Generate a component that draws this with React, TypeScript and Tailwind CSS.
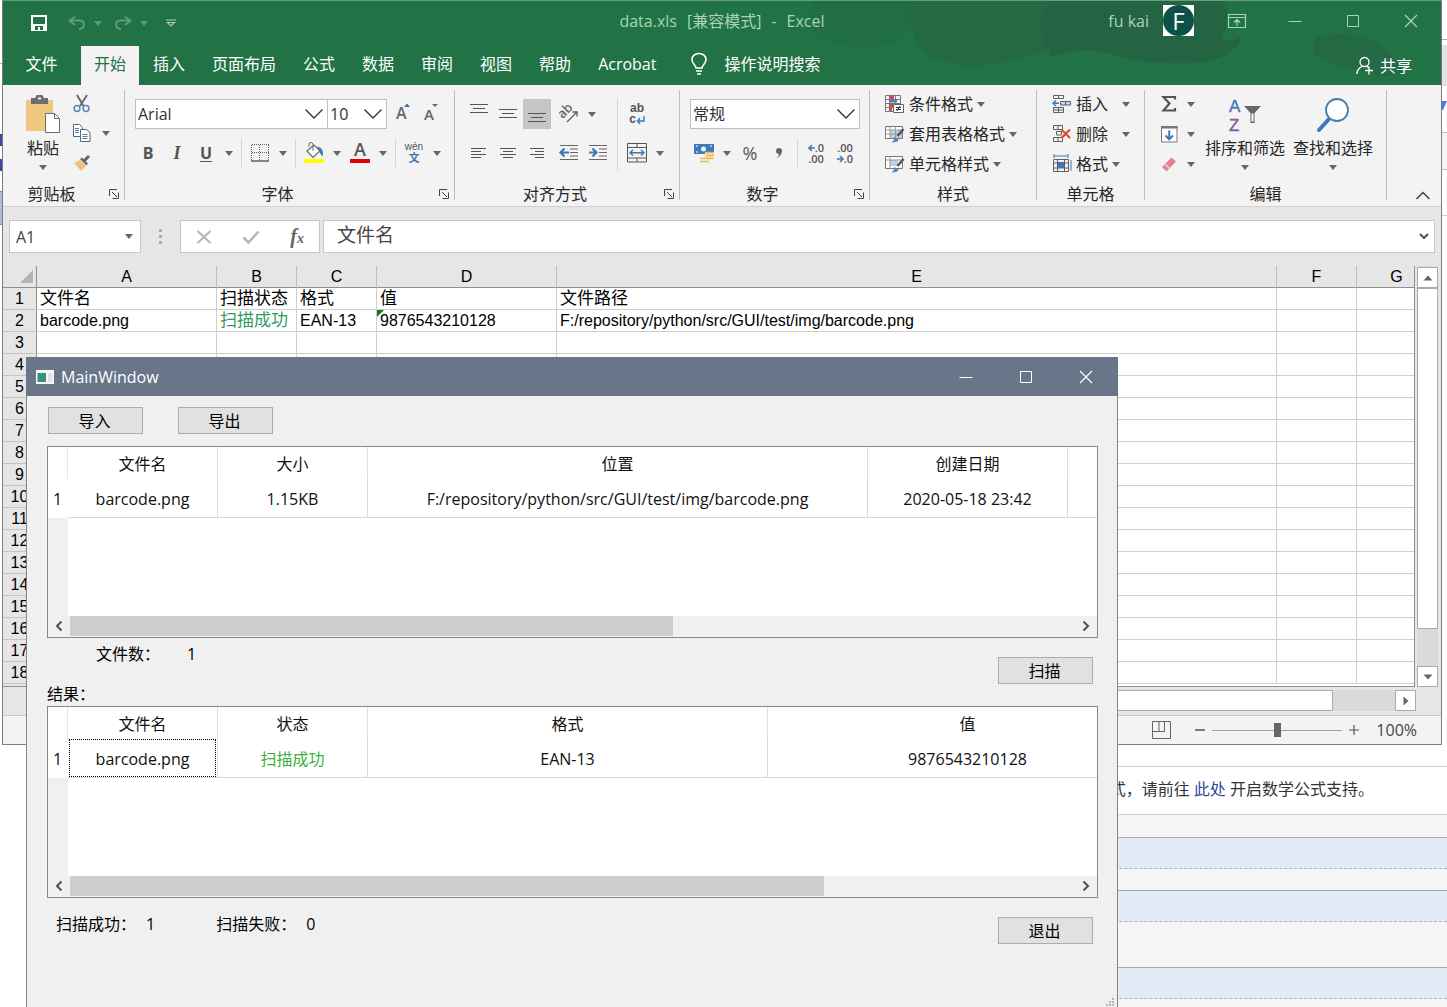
import type { ReactNode } from "react";

const UI_FONT = "font-['Open_Sans','Noto_Sans_CJK_SC',sans-serif]";
const GRID_FONT = "font-['Liberation_Sans','Noto_Sans_CJK_SC',sans-serif]";

const tabs = ["插入", "页面布局", "公式", "数据", "审阅", "视图", "帮助"];

const sheetColumns = [
  { name: "A", col: "w-[180px]" },
  { name: "B", col: "w-[80px]" },
  { name: "C", col: "w-[80px]" },
  { name: "D", col: "w-[180px]" },
  { name: "E", col: "w-[720px]" },
  { name: "F", col: "w-[80px]" },
  { name: "G", col: "w-[80px]" },
];

const sheetData: Record<string, string> = {
  A1: "文件名",
  B1: "扫描状态",
  C1: "格式",
  D1: "值",
  E1: "文件路径",
  A2: "barcode.png",
  B2: "扫描成功",
  C2: "EAN-13",
  D2: "9876543210128",
  E2: "F:/repository/python/src/GUI/test/img/barcode.png",
};

const sheetRows = Array.from({ length: 18 }, (_, i) => i + 1);

/* ---------- icons ---------- */

interface IconProps {
  w?: number;
  h?: number;
  className?: string;
  children: ReactNode;
}

function Icon({ w = 20, h = 20, className, children }: IconProps) {
  return (
    <svg
      width={w}
      height={h}
      viewBox={`0 0 ${w} ${h}`}
      fill="none"
      stroke="#5f5f5f"
      className={`shrink-0 overflow-visible ${className ?? ""}`}
      aria-hidden="true"
    >
      {children}
    </svg>
  );
}

function Caret({ color = "#666" }: { color?: string }) {
  return (
    <Icon w={8} h={5}>
      <path d="M0 0h8l-4 5z" fill={color} stroke="none" />
    </Icon>
  );
}

function Chevron() {
  return (
    <Icon w={20} h={12} className="pointer-events-none">
      <path d="M1.500 1.500l8.500 8.500 8.500-8.500" stroke="#333" strokeWidth="1.400" />
    </Icon>
  );
}

function SaveIcon() {
  return (
    <Icon w={18} h={18}>
      <path d="M2 2h14v14H2z" stroke="#fff" strokeWidth="2" />
      <path d="M3 10h12v6H3z" fill="#fff" stroke="none" />
      <path d="M5 12h8v4H5z" fill="#217346" stroke="none" />
      <path d="M8 13h2v3H8z" fill="#fff" stroke="none" />
    </Icon>
  );
}

function UndoIcon({ flip }: { flip?: boolean }) {
  return (
    <Icon w={18} h={16} className={flip ? "-scale-x-100" : ""}>
      <path d="M7 1.500L1.500 5.500 7 10" stroke="#5f9a78" strokeWidth="2" />
      <path d="M2 5.500h9c3 0 5 1.500 5 4s-2 4.500-5 4.500" stroke="#5f9a78" strokeWidth="2.200" />
    </Icon>
  );
}

function CustomizeIcon() {
  return (
    <Icon w={12} h={9}>
      <path d="M1 1h10M2.500 3.500h7L6 7z" stroke="#a9cdb8" strokeWidth="1.200" />
    </Icon>
  );
}

function PasteIcon() {
  return (
    <Icon w={36} h={40}>
      <path d="M1 5h27v31H1z" fill="#eec87f" stroke="none" />
      <path d="M6 3h4.500V2q0-2 2-2h4q2 0 2 2v1H23v6H6z" fill="#6d6d6d" stroke="none" />
      <path d="M13 2.500h3v2h-3z" fill="#f3f3f3" stroke="none" />
      <path d="M20.500 18.500h9l5 5v14h-14z" fill="#fff" stroke="#6d6d6d" />
      <path d="M29.500 18.500v5h5" stroke="#6d6d6d" />
    </Icon>
  );
}

function CutIcon() {
  return (
    <Icon w={18} h={19}>
      <path d="M4 1l6.500 11M14 1L7 12" stroke="#6a6a6a" strokeWidth="2" />
      <circle cx="4" cy="14.500" r="2.900" stroke="#5b87b8" strokeWidth="1.500" />
      <circle cx="13" cy="14.500" r="2.900" stroke="#5b87b8" strokeWidth="1.500" />
    </Icon>
  );
}

function CopyIcon() {
  return (
    <Icon w={18} h={18}>
      <path d="M.5.5h6l3 3v9h-9z" fill="#fff" stroke="#56677c" />
      <path d="M7.500 5.500h6l3.500 3v9H7.500z" fill="#fff" stroke="#56677c" />
      <path d="M2 4.500h4M2 6.500h4M2 8.500h4M9.500 10.500h5M9.500 12.500h5M9.500 14.500h5" stroke="#56799f" />
    </Icon>
  );
}

function BrushIcon() {
  return (
    <Icon w={18} h={16}>
      <path d="M1 8l6-3 6 6-5 5z" fill="#eec07a" stroke="none" />
      <path d="M7 4l2-1.500 6 6L13.500 10.500z" fill="#666" stroke="none" />
      <path d="M11 6l5-5" stroke="#666" strokeWidth="3" />
    </Icon>
  );
}

function BordersIcon() {
  return (
    <Icon w={18} h={18}>
      <path d="M.5 1v15M17.500 1v15M1 .5h17M8.500 1v15M1 8.500h17" strokeDasharray="1 1" />
      <path d="M0 17h18" strokeWidth="1.500" />
    </Icon>
  );
}

function FillIcon() {
  return (
    <Icon w={22} h={22}>
      <path d="M4 9l7-6 6 6-7 6.500z" fill="#fff" stroke="#666" strokeWidth="1.200" />
      <path d="M10 9V2.500q0-2 -2-2t-2 2V5" stroke="#666" />
      <path d="M14 4.500q7 1 6 9.500q-3-1-3.500-5z" fill="#3f78b5" stroke="none" />
      <path d="M1 17h20v4H1z" fill="#ffff00" stroke="none" />
    </Icon>
  );
}

function LinesIcon({ lines }: { lines: string }) {
  return (
    <Icon w={20} h={20}>
      <path d={lines} stroke="#555" />
    </Icon>
  );
}

function IndentIcon({ flip }: { flip?: boolean }) {
  return (
    <Icon w={20} h={18}>
      <path d="M1 1.500h18M11 5h8M11 8.500h8M11 12h8M1 15.500h18" stroke="#666" />
      <path
        d={flip ? "M1 8.500h7M4.500 4.500l4 4-4 4" : "M2 8.500h8M5.500 4.500l-4 4 4 4"}
        stroke="#3f78b5"
        strokeWidth="2.200"
      />
    </Icon>
  );
}

function OrientationIcon() {
  return (
    <Icon w={20} h={20}>
      <text
        x="0"
        y="11"
        transform="rotate(-45 7 9)"
        fontSize="13"
        fontWeight="600"
        fill="#666"
        stroke="none"
      >
        ab
      </text>
      <path d="M8 18L18 8M13.500 8H18v4.500" strokeWidth="1.300" />
    </Icon>
  );
}

function MergeIcon() {
  return (
    <Icon w={20} h={20}>
      <path d="M.5.5h19v18.500H.5zM.5 4.500h19M.5 15h19M10 .5v4M10 15v4" stroke="#555" />
      <path d="M3 9.750h14M6 7L3 9.750l3 2.750M14 7l3 2.750-3 2.750" stroke="#3f78b5" strokeWidth="1.400" />
    </Icon>
  );
}

function MoneyIcon() {
  return (
    <Icon w={20} h={20}>
      <path d="M0 1h20v10H0z" fill="#3f78b5" stroke="none" />
      <circle cx="9.500" cy="6" r="2.500" fill="#f3f3f3" stroke="none" />
      <path d="M2 3h2M2 9h2M16 3h2" stroke="#fff" />
      <path d="M11 9h9v7h-9z" fill="#f6e3b4" stroke="none" />
      <path d="M12 9.500h8M12 12.500h8M11 15.500h8M6 15.500h6M6 18.500h9" stroke="#e6b95f" strokeWidth="1.500" />
    </Icon>
  );
}

function ConditionalIcon() {
  return (
    <Icon w={20} h={20}>
      <path d="M.5 1.500h15v16H.5zM.5 5.500h15M.5 9.500h15M.5 13.500h15M4.500 1.500v16M10.500 1.500v16" stroke="#7a7a7a" />
      <path d="M4 1h5v4H4zM4 9h4v4H4zM4 14h3v3H4z" fill="#cf4b5c" stroke="none" />
      <path d="M4 5.500h8v3H4z" fill="#4b7fae" stroke="none" />
      <path d="M8.500 10.500h10v8h-10z" fill="#fff" stroke="#666" />
      <path d="M11 13.500h5M11 15.500h5M15 12l-3 5" stroke="#333" />
    </Icon>
  );
}

function TableStyleIcon({ single }: { single?: boolean }) {
  return (
    <Icon w={20} h={18}>
      <path d="M.5 1.500h17v12H.5z" fill="#fff" stroke="#777" />
      {single ? (
        <path d="M5 5h8v6H5z" fill="#bdd0e6" stroke="none" />
      ) : (
        <path d="M5 5h12v8H5z" fill="#bdd0e6" stroke="none" />
      )}
      <path d={single ? "M.5 5h17M5 1.500v12" : "M.5 5h17M.5 9h17M5 1.500v12M10.500 1.500v12"} stroke="#999" />
      <path d="M18.500 4l-6 7" stroke="#555" strokeWidth="2.500" />
      <path d="M6 17.500q3-1 3.500-5.500l4 2.500q0 3-7.500 3z" fill="#4b86c2" stroke="none" />
    </Icon>
  );
}

function InsertCellsIcon() {
  return (
    <Icon w={20} h={20}>
      <path d="M1.500 1.500h10v3h-10zM6.500 1.500v3M1.500 13.500h10v5h-10zM6.500 13.500v5M1.500 16h10" />
      <path d="M8.500 7.500h10v3.500h-10zM13.500 7.500v3.500" fill="#c9d8ea" />
      <path d="M7 9.250H1M4 6.500L1 9.250 4 12" stroke="#3f78b5" strokeWidth="1.400" />
    </Icon>
  );
}

function DeleteCellsIcon() {
  return (
    <Icon w={20} h={20}>
      <path d="M1.500 1.500h9v4h-9zM6 1.500v4M1.500 13.500h9v4h-9zM6 13.500v4M4.500 7.500h5v3.500h-5z" />
      <path d="M9.500 5.500l8.500 8.500M18 5.500L9.500 14" stroke="#cf5333" strokeWidth="2.200" />
    </Icon>
  );
}

function FormatCellsIcon() {
  return (
    <Icon w={20} h={20}>
      <path d="M1.500 5.500h15v12h-15zM1.500 9h15M1.500 14h15M5.500 5.500v12M12.500 5.500v12" />
      <path d="M6 8h6v6H6z" fill="#3f78b5" stroke="none" />
      <path d="M2 2h14M2 0v4M16 0v4M19 6v11" stroke="#3f78b5" />
    </Icon>
  );
}

function SigmaIcon() {
  return (
    <Icon w={16} h={18}>
      <path d="M14 4.500V2H2.500l6 6.500-6 7H14V13" stroke="#555" strokeWidth="2.200" />
    </Icon>
  );
}

function FillDownIcon() {
  return (
    <Icon w={17} h={18}>
      <path d="M.5 1.500h15.500v15.500H.5z" fill="#fff" stroke="#777" />
      <path d="M0 1h16.500v2.500H0z" fill="#777" stroke="none" />
      <path d="M8.250 5.500v8.500M4.500 10.500l3.750 3.750L12 10.500" stroke="#3f78b5" strokeWidth="2" />
    </Icon>
  );
}

function EraserIcon() {
  return (
    <Icon w={16} h={16}>
      <path d="M1 11l9.500-9.500 4.500 4L5.500 15.500z" fill="#e57f92" stroke="none" />
      <path d="M4 8l4.500 4.500" stroke="#f6d0d6" strokeWidth="1.500" />
    </Icon>
  );
}

function SortIcon() {
  return (
    <Icon w={38} h={34} className={GRID_FONT}>
      <text x="3" y="14" fontSize="17" fill="#3f78b5" stroke="#3f78b5" strokeWidth="0.400">
        A
      </text>
      <text x="3" y="33" fontSize="17" fill="#8a5a9e" stroke="#8a5a9e" strokeWidth="0.400">
        Z
      </text>
      <path d="M18 8h17l-6.500 7v10h-4V15z" fill="#666" stroke="none" />
      <path d="M25.500 15.500h2v8h-2z" fill="#fff" stroke="none" />
    </Icon>
  );
}

function FindIcon() {
  return (
    <Icon w={34} h={36}>
      <path d="M3 33l10-11" stroke="#3a7abf" strokeWidth="4" strokeLinecap="round" />
      <circle cx="21" cy="13" r="11" fill="#fff" stroke="#4a7ba8" strokeWidth="1.800" />
    </Icon>
  );
}

function LauncherIcon() {
  return (
    <Icon w={10} h={10}>
      <path d="M.5 7V.5H8M3 3l5 5M9.500 3.500v6h-6" stroke="#444" />
    </Icon>
  );
}

function BulbIcon() {
  return (
    <Icon w={18} h={24}>
      <path d="M6 16c0-3-4-4-4-8.500C2 4 5 1.500 9 1.500s7 2.500 7 6c0 4.500-4 5.500-4 8.500zM6 19h6M7 22h4" stroke="#fff" strokeWidth="1.600" />
    </Icon>
  );
}

function ShareIcon() {
  return (
    <Icon w={18} h={20}>
      <circle cx="8.500" cy="6" r="4.500" stroke="#fff" strokeWidth="1.300" />
      <path d="M1 18c0-4 2-6 5-7.500M11 10.500l2 1.500M9 14.500h8M13 10.500v8" stroke="#fff" strokeWidth="1.300" />
    </Icon>
  );
}

function WindowGlyph({ kind, color }: { kind: "min" | "max" | "close"; color: string }) {
  return (
    <Icon w={14} h={14}>
      {kind === "min" && <path d="M.5 7.500h13" stroke={color} />}
      {kind === "max" && <path d="M1.500 1.500h11v11h-11z" stroke={color} />}
      {kind === "close" && <path d="M1 1l12 12M13 1L1 13" stroke={color} strokeWidth="1.200" />}
    </Icon>
  );
}

/* ---------- ribbon ---------- */

interface ToolProps {
  label: string;
  active?: boolean;
  className?: string;
  children: ReactNode;
}

function Tool({ label, active, className, children }: ToolProps) {
  return (
    <button
      type="button"
      aria-label={label}
      className={`flex h-[30px] w-7 shrink-0 items-center justify-center text-[#555] ${
        active ? "bg-[#c5c5c5]" : ""
      } ${className ?? ""}`}
    >
      {children}
    </button>
  );
}

function More({ label }: { label: string }) {
  return (
    <button type="button" aria-label={label} className="flex h-[30px] w-4 shrink-0 items-center justify-center">
      <Caret />
    </button>
  );
}

function Separator() {
  return <span className="mx-[3px] h-7 w-px shrink-0 bg-[#d5d5d5]" />;
}

interface GroupProps {
  title: string;
  width: string;
  launcher?: boolean;
  children: ReactNode;
}

function Group({ title, width, launcher, children }: GroupProps) {
  return (
    <section className={`flex shrink-0 flex-col border-r border-[#bdbdbd] ${width}`}>
      <div className="h-[94px] shrink-0">{children}</div>
      <div className="flex h-5 shrink-0 items-center">
        <h2 className="flex-1 text-center text-base leading-5">{title}</h2>
        {launcher && (
          <button type="button" aria-label={`${title}设置`} className="flex w-6 items-center pl-[9px]">
            <LauncherIcon />
          </button>
        )}
      </div>
    </section>
  );
}

function ComboBox({ label, value, width }: { label: string; value: string; width: string }) {
  return (
    <div className={`relative h-[30px] ${width}`}>
      <select
        aria-label={label}
        defaultValue={value}
        className="h-full w-full appearance-none border border-[#c0c0c0] bg-white pl-[2px] text-base text-[#333] outline-none"
      >
        <option>{value}</option>
      </select>
      <span className="pointer-events-none absolute inset-y-0 right-1 flex items-center">
        <Chevron />
      </span>
    </div>
  );
}

interface MenuItemProps {
  icon: ReactNode;
  label: string;
  wide?: boolean;
}

function MenuItem({ icon, label, wide }: MenuItemProps) {
  return (
    <button type="button" className="flex h-[30px] items-center gap-1 text-base">
      {icon}
      <span>{label}</span>
      <span className={wide ? "ml-[6px] flex w-4 justify-center" : "flex w-2 justify-center"}>
        <Caret />
      </span>
    </button>
  );
}

function BigButton({ icon, label, className }: { icon: ReactNode; label: string; className?: string }) {
  return (
    <button type="button" className={`flex flex-col items-center text-base ${className ?? ""}`}>
      <span className="flex h-[46px] items-center">{icon}</span>
      <span className="leading-5">{label}</span>
      <span className="flex h-[18px] items-center">
        <Caret />
      </span>
    </button>
  );
}

function Ribbon() {
  return (
    <div className="flex h-[122px] border-b border-[#d2d2d2] bg-[#f3f3f3] pt-[5px] pb-[6px] text-[#262626]">
      <Group title="剪贴板" width="w-[122px]" launcher>
        <div className="flex">
          <BigButton icon={<PasteIcon />} label="粘贴" className="mt-[2px] ml-[22px]" />
          <div className="ml-[7px] flex flex-col">
            <Tool label="剪切" className="-mt-[2px]">
              <CutIcon />
            </Tool>
            <div className="flex gap-[2px]">
              <Tool label="复制">
                <CopyIcon />
              </Tool>
              <More label="复制选项" />
            </div>
            <Tool label="格式刷">
              <BrushIcon />
            </Tool>
          </div>
        </div>
      </Group>

      <Group title="字体" width="w-[330px]" launcher>
        <div className="flex flex-col gap-[9px] pt-[9px] pl-[9px]">
          <div className="flex items-center">
            <ComboBox label="字体名称" value="Arial" width="ml-px w-[193px]" />
            <ComboBox label="字号" value="10" width="-ml-px w-[60px]" />
            <Tool label="增大字号" className="ml-[3px]">
              <Icon w={18} h={22}>
                <text x="1" y="16" fontSize="16" fontWeight="600" fill="#666" stroke="none">
                  A
                </text>
                <path d="M9 4l3-3.500L15 4z" fill="#3f6ea5" stroke="none" />
              </Icon>
            </Tool>
            <Tool label="减小字号">
              <Icon w={18} h={22}>
                <text x="1" y="17" fontSize="15" fontWeight="600" fill="#666" stroke="none">
                  A
                </text>
                <path d="M9 1h6l-3 3z" fill="#3f6ea5" stroke="none" />
              </Icon>
            </Tool>
          </div>
          <div className="flex items-center gap-px">
            <Tool label="加粗" className="text-base font-bold">
              B
            </Tool>
            <Tool label="倾斜" className="font-['Liberation_Serif',serif] text-lg font-bold italic">
              I
            </Tool>
            <Tool label="下划线" className="text-base font-bold underline underline-offset-2">
              U
            </Tool>
            <More label="下划线选项" />
            <Separator />
            <Tool label="边框">
              <BordersIcon />
            </Tool>
            <More label="边框选项" />
            <Separator />
            <Tool label="填充颜色">
              <FillIcon />
            </Tool>
            <More label="填充颜色选项" />
            <Tool label="字体颜色">
              <Icon w={22} h={22}>
                <text x="5" y="14" fontSize="18" fontWeight="600" fill="#555" stroke="none">
                  A
                </text>
                <path d="M1 17h20v4H1z" fill="#e60000" stroke="none" />
              </Icon>
            </Tool>
            <More label="字体颜色选项" />
            <Separator />
            <Tool label="拼音" className={`flex-col ${GRID_FONT}`}>
              <span className="text-[10px] leading-[10px]">wén</span>
              <span className="text-[11px] leading-3 font-bold text-[#3f78b5]">文</span>
            </Tool>
            <More label="拼音选项" />
          </div>
        </div>
      </Group>

      <Group title="对齐方式" width="w-[225px]" launcher>
        <div className="flex pt-[9px] pl-[10px]">
          <div className="flex flex-col gap-[9px]">
            <div className="flex gap-px">
              <Tool label="顶端对齐">
                <LinesIcon lines="M1 0.500h18M4 4.500h12M1 8.500h18" />
              </Tool>
              <Tool label="垂直居中">
                <LinesIcon lines="M1 5.500h18M4 9.500h12M1 13.500h18" />
              </Tool>
              <Tool label="底端对齐" active>
                <LinesIcon lines="M1 9.500h18M4 13.500h12M1 17.500h18" />
              </Tool>
              <Tool label="方向" className="ml-[3px]">
                <OrientationIcon />
              </Tool>
              <More label="方向选项" />
            </div>
            <div className="flex gap-px">
              <Tool label="左对齐">
                <LinesIcon lines="M2 5.500h15M2 8.500h10M2 11.500h15M2 14.500h10" />
              </Tool>
              <Tool label="居中">
                <LinesIcon lines="M2 5.500h16M5 8.500h10M2 11.500h16M5 14.500h10" />
              </Tool>
              <Tool label="右对齐">
                <LinesIcon lines="M3 5.500h14M8 8.500h9M3 11.500h14M8 14.500h9" />
              </Tool>
              <Tool label="减少缩进量" className="ml-[3px]">
                <IndentIcon />
              </Tool>
              <Tool label="增加缩进量">
                <IndentIcon flip />
              </Tool>
            </div>
          </div>
          <span className="mr-[5px] ml-[5px] h-[72px] w-px bg-[#d5d5d5]" />
          <div className="flex flex-col gap-[9px]">
            <Tool label="自动换行" className={`flex-col font-bold ${GRID_FONT}`}>
              <span className="text-[12px] leading-[11px]">ab</span>
              <span className="flex text-[12px] leading-[11px]">
                c
                <Icon w={9} h={10}>
                  <path d="M8 2v5H1.500M4 4L1.500 7 4 10" stroke="#3f78b5" strokeWidth="1.400" />
                </Icon>
              </span>
            </Tool>
            <div className="flex gap-px">
              <Tool label="合并后居中">
                <MergeIcon />
              </Tool>
              <More label="合并选项" />
            </div>
          </div>
        </div>
      </Group>

      <Group title="数字" width="w-[190px]" launcher>
        <div className="flex flex-col gap-[9px] pt-[9px] pl-[10px]">
          <ComboBox label="数字格式" value="常规" width="w-[170px]" />
          <div className="flex items-center gap-px">
            <Tool label="会计数字格式">
              <MoneyIcon />
            </Tool>
            <More label="会计数字格式选项" />
            <Tool label="百分比样式" className="text-lg">
              %
            </Tool>
            <Tool label="千位分隔样式">
              <Icon w={8} h={12}>
                <path d="M4 1c2 0 3 1 3 3 0 3-2 5-5 7 1-2 2-3 2-4-2 0-3-1-3-3s1-3 3-3z" fill="#666" stroke="none" />
              </Icon>
            </Tool>
            <Separator />
            <Tool label="增加小数位数" className="flex-col text-[11px] font-semibold">
              <span className="flex items-center leading-[11px]">
                <Icon w={7} h={8}>
                  <path d="M7 4H1M4 1L1 4l3 3" stroke="#3f78b5" strokeWidth="1.600" />
                </Icon>
                .0
              </span>
              <span className="leading-[11px]">.00</span>
            </Tool>
            <Tool label="减少小数位数" className="flex-col text-[11px] font-semibold">
              <span className="leading-[11px]">.00</span>
              <span className="flex items-center leading-[11px]">
                <Icon w={7} h={8}>
                  <path d="M0 4h6M3 1l3 3-3 3" stroke="#3f78b5" strokeWidth="1.600" />
                </Icon>
                .0
              </span>
            </Tool>
          </div>
        </div>
      </Group>

      <Group title="样式" width="w-[167px]">
        <div className="-mt-px flex flex-col items-start pl-[15px]">
          <MenuItem icon={<ConditionalIcon />} label="条件格式" />
          <MenuItem icon={<TableStyleIcon />} label="套用表格格式" />
          <MenuItem icon={<TableStyleIcon single />} label="单元格样式" />
        </div>
      </Group>

      <Group title="单元格" width="w-[108px]">
        <div className="-mt-px flex flex-col items-start pl-[15px]">
          <MenuItem icon={<InsertCellsIcon />} label="插入" wide />
          <MenuItem icon={<DeleteCellsIcon />} label="删除" wide />
          <MenuItem icon={<FormatCellsIcon />} label="格式" />
        </div>
      </Group>

      <Group title="编辑" width="w-[242px]">
        <div className="-mt-px flex pl-[10px]">
          <div className="flex flex-col">
            <div className="flex">
              <Tool label="自动求和">
                <SigmaIcon />
              </Tool>
              <More label="求和选项" />
            </div>
            <div className="flex">
              <Tool label="填充">
                <FillDownIcon />
              </Tool>
              <More label="填充选项" />
            </div>
            <div className="flex">
              <Tool label="清除">
                <EraserIcon />
              </Tool>
              <More label="清除选项" />
            </div>
          </div>
          <BigButton icon={<SortIcon />} label="排序和筛选" className="mt-[3px] ml-[6px]" />
          <BigButton icon={<FindIcon />} label="查找和选择" className="mt-[3px] ml-2" />
        </div>
      </Group>

      <button type="button" aria-label="折叠功能区" className="mr-[10px] ml-auto self-end">
        <Icon w={16} h={9}>
          <path d="M1.500 8L8 1.500 14.500 8" stroke="#444" strokeWidth="1.500" />
        </Icon>
      </button>
    </div>
  );
}

/* ---------- Excel window ---------- */

function TitleBar() {
  return (
    <div className="relative border-t border-[#62a07d] bg-[#217346] text-[#a9d3bb]">
      <svg
        className="absolute inset-y-0 right-0 h-full w-[660px]"
        viewBox="0 0 660 84"
        preserveAspectRatio="none"
        fill="#246442"
        aria-hidden="true"
      >
        <path d="M30 0h100v30q-20 18-50 16t-46-12q-8-18-4-34z" fillOpacity="0.350" />
        <path d="M130 0h140v50q-30 8-62 14-40 4-64-12q-18-20-14-52z" fillOpacity="0.600" />
        <path d="M270 0h172q10 18-2 38 10 4 20-2-6 22-46 26-50 2-80-8-34-10-64 2-10-20-12-38z" />
        <path d="M536 36q24-6 50 0 24 12 36 36-20 8-46-4-24-2-44-14 0-12 4-18z" fillOpacity="0.600" />
      </svg>
      <div className="relative grid h-[45px] grid-cols-[1fr_auto_1fr] items-center pb-[6px]">
        <div className="flex items-center pt-[5px] pl-[27px]">
          <button type="button" aria-label="保存">
            <SaveIcon />
          </button>
          <button type="button" aria-label="撤消" className="mr-2 ml-5">
            <UndoIcon />
          </button>
          <Caret color="#5f9a78" />
          <button type="button" aria-label="恢复" className="mr-2 ml-3">
            <UndoIcon flip />
          </button>
          <Caret color="#5f9a78" />
          <button type="button" aria-label="自定义快速访问工具栏" className="ml-[17px]">
            <CustomizeIcon />
          </button>
        </div>
        <h1 className="flex gap-[10px] text-base">
          <span>data.xls</span>
          <span>[兼容模式]</span>
          <span>-</span>
          <span>Excel</span>
        </h1>
        <div className="flex items-center justify-end pr-px">
          <span className="mr-[14px] text-base">fu kai</span>
          <span className="mr-[14px] flex size-[31px] bg-white">
            <span className="flex w-full items-center justify-center rounded-full bg-[#0c5048] text-2xl leading-none text-white">
              F
            </span>
          </span>
          <button type="button" aria-label="功能区显示选项" className="flex w-[58px] justify-center">
            <Icon w={18} h={14}>
              <path d="M.5.5h17v13H.5zM.5 3.500h17M9 12V6M6 8.500L9 5.500l3 3" stroke="#a9d3bb" strokeWidth="1.200" />
            </Icon>
          </button>
          <button type="button" aria-label="最小化" className="flex w-[58px] justify-center">
            <WindowGlyph kind="min" color="#a9d3bb" />
          </button>
          <button type="button" aria-label="最大化" className="flex w-[58px] justify-center">
            <WindowGlyph kind="max" color="#a9d3bb" />
          </button>
          <button type="button" aria-label="关闭" className="flex w-[58px] justify-center">
            <WindowGlyph kind="close" color="#a9d3bb" />
          </button>
        </div>
      </div>
      <nav className="relative flex h-[39px] items-stretch gap-px text-base text-white">
        <button type="button" className="w-[77px] pb-[3px]">
          文件
        </button>
        <button type="button" className="bg-[#f3f3f3] px-[13px] pb-[3px] text-[#217346]">
          开始
        </button>
        {tabs.map((tab) => (
          <button key={tab} type="button" className="px-[13px] pb-[3px]">
            {tab}
          </button>
        ))}
        <button type="button" className="px-[13px] pb-[3px]">
          Acrobat
        </button>
        <button type="button" className="ml-5 flex items-center gap-4 pb-[3px]">
          <BulbIcon />
          操作说明搜索
        </button>
        <button type="button" className="mr-[29px] ml-auto flex items-center gap-[6px]">
          <ShareIcon />
          共享
        </button>
      </nav>
    </div>
  );
}

function FormulaBar() {
  return (
    <div className="flex h-[59px] items-start bg-[#e6e6e6] px-[6px] pt-[13px]">
      <div className="relative">
        <input
          aria-label="名称框"
          defaultValue="A1"
          className="h-[33px] w-[132px] border border-[#c6c6c6] bg-white pl-[6px] text-base text-[#444] outline-none"
        />
        <span className="pointer-events-none absolute inset-y-0 right-2 flex items-center">
          <Caret />
        </span>
      </div>
      <div className="flex h-[33px] w-[39px] flex-col items-center justify-center gap-[3px]">
        <span className="size-[3px] bg-[#aaa]" />
        <span className="size-[3px] bg-[#aaa]" />
        <span className="size-[3px] bg-[#aaa]" />
      </div>
      <div className="flex h-[33px] w-[140px] items-center justify-around border border-[#c6c6c6] bg-white">
        <button type="button" aria-label="取消">
          <Icon w={16} h={14}>
            <path d="M1.500 1l13 12M14.500 1l-13 12" stroke="#b5b5b5" strokeWidth="2" />
          </Icon>
        </button>
        <button type="button" aria-label="输入">
          <Icon w={18} h={14}>
            <path d="M1.500 7.500l5 5L16.500 1.500" stroke="#b5b5b5" strokeWidth="2.500" />
          </Icon>
        </button>
        <button
          type="button"
          aria-label="插入函数"
          className="font-['Liberation_Serif',serif] text-xl leading-6 font-bold text-[#666] italic"
        >
          f<span className="text-sm">x</span>
        </button>
      </div>
      <div className="relative ml-[3px] flex-1">
        <input
          aria-label="编辑栏"
          defaultValue="文件名"
          className="h-[33px] w-full border border-[#c6c6c6] bg-white pb-[5px] pl-[13px] text-[19px] text-[#444] outline-none"
        />
        <span className="pointer-events-none absolute inset-y-0 right-[6px] flex items-center">
          <Icon w={10} h={7}>
            <path d="M1 1l4 4 4-4" stroke="#555" strokeWidth="2.200" />
          </Icon>
        </span>
      </div>
    </div>
  );
}

function Sheet() {
  return (
    <div className="flex bg-[#e6e6e6]">
      <div className={`min-w-0 flex-1 overflow-hidden border-r border-b border-[#8f8f8f] bg-white ${GRID_FONT}`}>
        <table className="w-[1434px] table-fixed border-separate border-spacing-0 text-[17px] leading-5 text-black">
          <colgroup>
            <col className="w-[34px]" />
            {sheetColumns.map((c) => (
              <col key={c.name} className={c.col} />
            ))}
          </colgroup>
          <thead>
            <tr className="h-[22px] bg-[#e6e6e6]">
              <th className="border-r border-b border-[#8f8f8f] p-0 pr-[3px]" aria-label="全选">
                <Icon w={13} h={13} className="ml-auto">
                  <path d="M13 0v13H0z" fill="#b3b3b3" stroke="none" />
                </Icon>
              </th>
              {sheetColumns.map((c) => (
                <th
                  key={c.name}
                  className="border-r border-b border-r-[#bdbdbd] border-b-[#8f8f8f] p-0 pt-px text-base leading-5 font-normal"
                >
                  {c.name}
                </th>
              ))}
            </tr>
          </thead>
          <tbody>
            {sheetRows.map((row) => (
              <tr key={row} className="h-[22px]">
                <th className="border-r border-b border-r-[#8f8f8f] border-b-[#c4c4c4] bg-[#e6e6e6] p-0 pt-px text-base leading-5 font-normal">
                  {row}
                </th>
                {sheetColumns.map((c) => {
                  const key = `${c.name}${row}`;
                  return (
                    <td
                      key={key}
                      className={`relative border-r border-b border-[#cfcfcf] p-0 pt-px pl-[3px] whitespace-nowrap ${
                        row === 2 && c.name !== "B" ? "text-base leading-5" : ""
                      } ${key === "B2" ? "text-[#2e9b63]" : ""}`}
                    >
                      {key === "D2" && (
                        <svg width="7" height="7" className="absolute top-0 left-0" aria-hidden="true">
                          <path d="M0 0h7L0 7z" fill="#107c10" />
                        </svg>
                      )}
                      {sheetData[key]}
                    </td>
                  );
                })}
              </tr>
            ))}
            <tr className="h-[2px]">
              <th className="border-r border-[#8f8f8f] bg-[#e6e6e6] p-0" />
            </tr>
          </tbody>
        </table>
      </div>
      <div className="mr-[3px] ml-[2px] flex w-[21px] flex-col bg-[#dadada] pt-px">
        <button type="button" aria-label="向上滚动" className="flex h-[21px] items-center justify-center border border-[#ababab] bg-white">
          <Icon w={10} h={6}>
            <path d="M0.500 5.500h9L5 .5z" fill="#666" stroke="none" />
          </Icon>
        </button>
        <div className="h-[341px] border border-[#ababab] bg-white" />
        <button type="button" aria-label="向下滚动" className="mt-auto flex h-[21px] items-center justify-center border border-[#ababab] bg-white">
          <Icon w={10} h={6}>
            <path d="M0.500 .5h9L5 5.500z" fill="#666" stroke="none" />
          </Icon>
        </button>
      </div>
    </div>
  );
}

function StatusBar() {
  return (
    <>
      <div className="flex h-[29px] items-start justify-end border-b border-[#c6c6c6] bg-[#e6e6e6] pt-[3px] pr-[25px]">
        <div className="h-[21px] w-[400px] border border-[#ababab] bg-white" />
        <div className="h-[21px] w-[62px] bg-[#dadada]" />
        <button type="button" aria-label="向右滚动" className="flex size-[21px] items-center justify-center border border-[#ababab] bg-white">
          <Icon w={6} h={10}>
            <path d="M.5.500v9L5.500 5z" fill="#666" stroke="none" />
          </Icon>
        </button>
      </div>
      <div className="flex h-7 items-center justify-end bg-[#f3f3f3] pr-6 text-base text-[#444]">
        <button type="button" aria-label="分页预览" className="mr-[22px]">
          <Icon w={20} h={18}>
            <path d="M.5.500h18v17H.500zM.500 10.500h12M7 .500v10M12.500.500v10" stroke="#666" />
          </Icon>
        </button>
        <button type="button" aria-label="缩小" className="mr-[6px]">
          <Icon w={12} h={12}>
            <path d="M1 6h10" stroke="#555" strokeWidth="1.500" />
          </Icon>
        </button>
        <input
          type="range"
          aria-label="显示比例"
          defaultValue={50}
          className="h-4 w-[130px] appearance-none bg-transparent [&::-webkit-slider-runnable-track]:h-px [&::-webkit-slider-runnable-track]:bg-[#a0a0a0] [&::-webkit-slider-thumb]:-mt-[7px] [&::-webkit-slider-thumb]:h-[14px] [&::-webkit-slider-thumb]:w-[7px] [&::-webkit-slider-thumb]:appearance-none [&::-webkit-slider-thumb]:bg-[#666]"
        />
        <button type="button" aria-label="放大" className="mr-4 ml-[6px]">
          <Icon w={12} h={12}>
            <path d="M1 6h10M6 1v10" stroke="#555" strokeWidth="1.200" />
          </Icon>
        </button>
        <span>100%</span>
      </div>
    </>
  );
}

function ExcelWindow() {
  return (
    <section className="absolute top-0 right-[5px] left-[2px] overflow-hidden border-x border-b border-[#7d7d7d]">
      <TitleBar />
      <Ribbon />
      <FormulaBar />
      <Sheet />
      <StatusBar />
    </section>
  );
}

/* ---------- scanner window ---------- */

interface Cell {
  text: string;
  tone?: string;
  focused?: boolean;
}

interface ListBoxProps {
  headers: string[];
  widths: string[];
  cells: Cell[];
  tableWidth: string;
  thumb: string;
}

function ScrollArrow({ label, d }: { label: string; d: string }) {
  return (
    <button type="button" aria-label={label} className="flex w-[22px] shrink-0 items-center justify-center">
      <Icon w={8} h={12}>
        <path d={d} stroke="#505050" strokeWidth="2" />
      </Icon>
    </button>
  );
}

function ListBox({ headers, widths, cells, tableWidth, thumb }: ListBoxProps) {
  return (
    <div className="flex h-[192px] flex-col overflow-hidden border border-[#828790] bg-white">
      <div className="flex-1 overflow-hidden bg-linear-to-r from-[#f0f0f0] from-[20px] to-white to-[20px]">
        <table className={`table-fixed border-separate border-spacing-0 bg-white text-base text-[#111] ${tableWidth}`}>
          <colgroup>
            <col className="w-5" />
            {widths.map((w, i) => (
              <col key={i} className={w} />
            ))}
          </colgroup>
          <thead>
            <tr className="h-8">
              <th className="border-r border-[#e5e5e5] p-0" />
              {headers.map((h, i) => (
                <th key={i} className="border-r border-[#e0e0e0] p-0 pt-px leading-5 font-normal">
                  {h}
                </th>
              ))}
            </tr>
          </thead>
          <tbody>
            <tr className="h-[39px]">
              <th className="p-0 pr-px font-normal">1</th>
              {cells.map((c, i) => (
                <td key={i} className={`border-r border-b border-[#d8d8d8] p-0 text-center ${c.tone ?? ""}`}>
                  <span
                    className={`flex h-[38px] items-center justify-center pt-[2px] ${
                      c.focused ? "mx-px border border-dotted border-black" : ""
                    }`}
                  >
                    {c.text}
                  </span>
                </td>
              ))}
            </tr>
          </tbody>
        </table>
      </div>
      <div className="flex h-[21px] bg-[#f0f0f0] pb-px">
        <ScrollArrow label="向左滚动" d="M6.500 1.500L2 6l4.500 4.500" />
        <div className="min-w-0 flex-1">
          <div className={`h-full bg-[#cdcdcd] ${thumb}`} />
        </div>
        <ScrollArrow label="向右滚动" d="M1.500 1.500L6 6l-4.500 4.500" />
      </div>
    </div>
  );
}

function PushButton({ children }: { children: ReactNode }) {
  return (
    <button
      type="button"
      className="flex h-[27px] w-[95px] items-center justify-center border border-[#adadad] bg-[#e1e1e1] pr-[2px] text-base leading-5 text-black"
    >
      {children}
    </button>
  );
}

function ScannerWindow() {
  return (
    <section className="absolute top-[357px] right-[329px] bottom-0 left-[26px] flex flex-col overflow-hidden">
      <header className="flex h-[39px] shrink-0 items-center bg-[#69768a] pl-[10px] text-white">
        <Icon w={18} h={14}>
          <path d="M0 0h18v14H0z" fill="#f4f6f8" stroke="none" />
          <path d="M1.500 3h8.500v9h-8.500z" fill="#3a8f80" stroke="none" />
          <path d="M12 3.500h4.500v8.500H12z" fill="#dfe3e6" stroke="none" />
        </Icon>
        <h1 className="ml-[7px] text-base">MainWindow</h1>
        <div className="ml-auto flex pr-[2px]">
          <button type="button" aria-label="最小化" className="flex w-[60px] justify-center">
            <WindowGlyph kind="min" color="#fff" />
          </button>
          <button type="button" aria-label="最大化" className="flex w-[60px] justify-center">
            <WindowGlyph kind="max" color="#fff" />
          </button>
          <button type="button" aria-label="关闭" className="flex w-[60px] justify-center">
            <WindowGlyph kind="close" color="#fff" />
          </button>
        </div>
      </header>
      <div className="relative flex-1 border-x border-[#84868c] bg-[#f0f0f0] px-5 pt-[11px] text-base leading-5 text-black">
        <div className="flex gap-[35px] pl-px">
          <PushButton>导入</PushButton>
          <PushButton>导出</PushButton>
        </div>
        <div className="mt-3 mr-[-1px]">
          <ListBox
            headers={["文件名", "大小", "位置", "创建日期", ""]}
            widths={["w-[150px]", "w-[150px]", "w-[500px]", "w-[200px]", "w-[100px]"]}
            cells={[
              { text: "barcode.png" },
              { text: "1.15KB" },
              { text: "F:/repository/python/src/GUI/test/img/barcode.png" },
              { text: "2020-05-18 23:42" },
              { text: "" },
            ]}
            tableWidth="w-[1120px]"
            thumb="w-[60%]"
          />
        </div>
        <div className="flex justify-between">
          <div className="mt-[6px] flex gap-[27px] pl-[49px]">
            <span>文件数：</span>
            <output>1</output>
          </div>
          <div className="mt-[19px] mr-1">
            <PushButton>扫描</PushButton>
          </div>
        </div>
        <h2>结果：</h2>
        <div className="mt-[2px] mr-[-1px]">
          <ListBox
            headers={["文件名", "状态", "格式", "值"]}
            widths={["w-[150px]", "w-[150px]", "w-[400px]", "w-[400px]"]}
            cells={[
              { text: "barcode.png", focused: true },
              { text: "扫描成功", tone: "text-[#3cb043]" },
              { text: "EAN-13" },
              { text: "9876543210128" },
            ]}
            tableWidth="w-[1120px]"
            thumb="w-3/4"
          />
        </div>
        <div className="flex justify-between pl-[9px]">
          <div className="mt-4 flex gap-[10px]">
            <span>扫描成功：</span>
            <output>1</output>
            <span className="ml-[51px]">扫描失败：</span>
            <output>0</output>
          </div>
          <div className="mt-[19px] mr-1">
            <PushButton>退出</PushButton>
          </div>
        </div>
        <svg width="10" height="10" className="absolute right-0.5 bottom-0" aria-hidden="true">
          <path d="M7 1h2v2H7zM7 4h2v2H7zM7 7h2v2H7zM4 4h2v2H4zM4 7h2v2H4zM1 7h2v2H1z" fill="#b5b5b5" />
        </svg>
      </div>
    </section>
  );
}

/* ---------- page behind both windows ---------- */

function Band({ gap }: { gap: string }) {
  return (
    <div
      className={`h-8 border-t border-b border-t-[#a3a9b2] border-b-[#a9b4c0] bg-[#e4ebf6] [border-bottom-style:dashed] ${gap}`}
    />
  );
}

function BackPage() {
  return (
    <div className="flex h-full flex-col">
      <div className="flex h-[766px] shrink-0 justify-between">
        <div className="flex w-2 flex-col">
          <div className="h-16 border-b border-[#ababab]" />
          <div className="mt-[70px] h-3 bg-[#3a4aa0]" />
          <div className="mt-[13px] h-3 bg-[#3a4aa0]" />
          <div className="mt-5 h-[34px] border-y border-[#7f8b96] bg-[#adbfd0]" />
        </div>
        <div className="flex w-2 flex-col">
          <div className="h-10 border-b border-[#ababab]" />
          <div className="mt-[5px] h-[41px] bg-[#e3e3e3]" />
          <svg width="8" height="10" className="mt-[15px]" aria-hidden="true">
            <path d="M0 0h8L4 9H0z" fill="#3b82f6" />
          </svg>
          <div className="mt-[21px] h-[38px] border-y border-[#c0c0c0] bg-[#f5f5f5]" />
          <div className="h-[46px] border-b border-[#cfcfcf]" />
        </div>
      </div>
      <div className="ml-[26px] flex-1 bg-[#f5f5f5]">
        <p className="flex h-[49px] items-center justify-end border-y border-[#d0d0d0] bg-white pr-[73px] pb-[3px] text-base text-[#333]">
          式，请前往&nbsp;
          <a href="#math" className="text-[#2a4b9b]">
            此处
          </a>
          &nbsp;开启数学公式支持。
        </p>
        <Band gap="mt-[22px]" />
        <Band gap="mt-[21px]" />
        <Band gap="mt-[45px]" />
      </div>
    </div>
  );
}

export default function App() {
  return (
    <main className={`relative h-screen min-h-[800px] overflow-hidden bg-white ${UI_FONT}`}>
      <BackPage />
      <ExcelWindow />
      <ScannerWindow />
    </main>
  );
}
